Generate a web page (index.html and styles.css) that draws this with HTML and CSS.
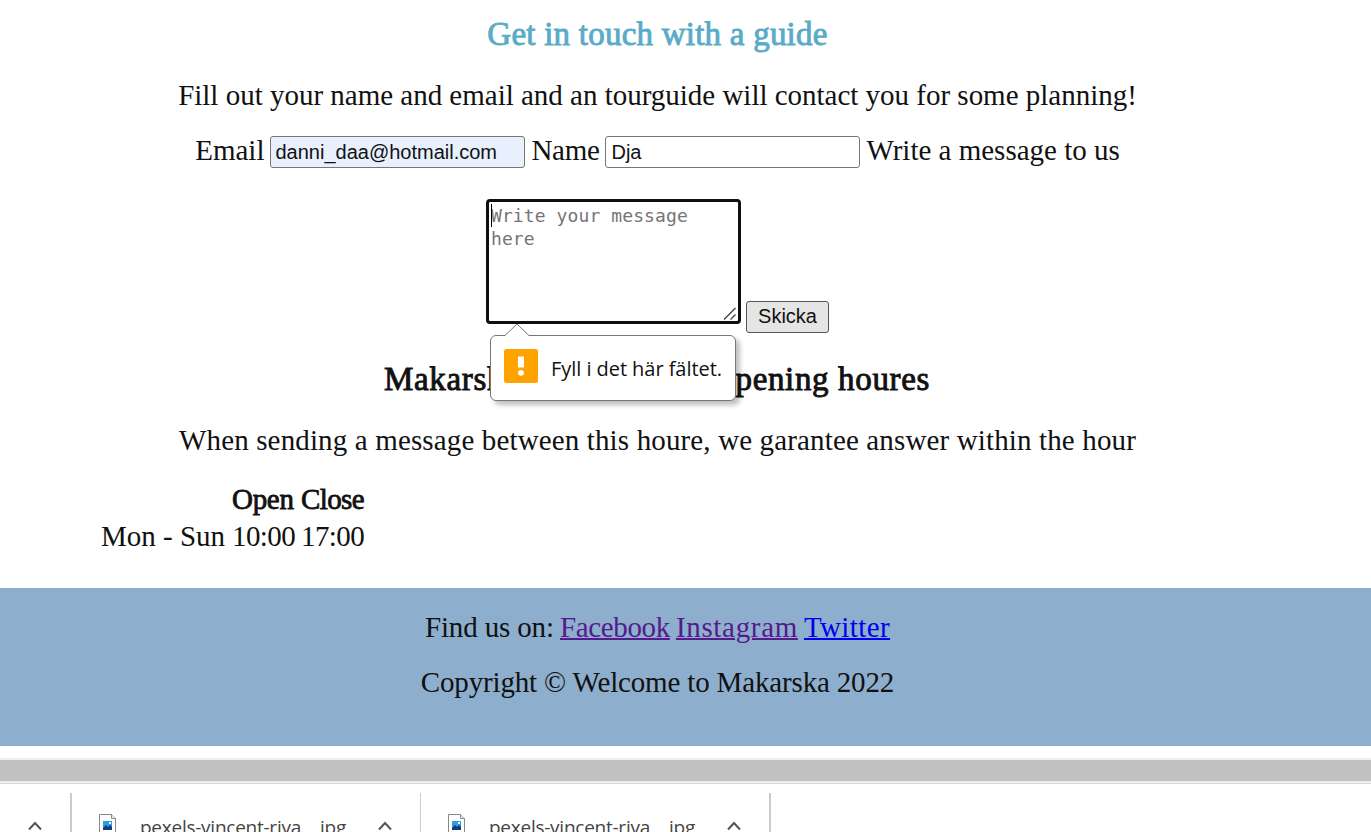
FILE: index.html
```html
<!DOCTYPE html>
<html lang="en">
<head>
<meta charset="utf-8">
<title>Welcome to Makarska</title>
<link rel="stylesheet" href="styles.css">
</head>
<body>
<main class="page">
  <h2 class="title">Get in touch with a guide</h2>
  <p class="intro">Fill out your name and email and an tourguide will contact you for some planning!</p>
  <form class="contact">
    <div class="fields">
      <label class="label" for="email">Email</label>
      <input class="input input-filled" id="email" value="danni_daa@hotmail.com">
      <label class="label label-name" for="name">Name</label>
      <input class="input" id="name" value="Dja">
      <label class="label" for="message">Write a message to us</label>
    </div>
    <div class="message-row">
      <div class="message">
        <textarea class="textarea" id="message" placeholder="Write your message here"></textarea>
        <span class="caret"></span>
        <svg class="grip" width="14" height="14" viewBox="0 0 14 14"><path d="M1 12.500 12.500 1M7.500 12.500l5-5" fill="none" stroke="#444" stroke-width="1.400"/></svg>
        <div class="tooltip">
          <svg class="tooltip-tip" width="26" height="14" viewBox="0 0 26 14"><path d="M1 12.500 13 1 25 12.500V14H1z" fill="#fff"/><path d="M1 12.500 13 1 25 12.500" fill="none" stroke="#777"/></svg>
          <svg class="warning" width="34" height="34" viewBox="0 0 34 34"><rect width="34" height="34" rx="2.500" fill="#ffa300"/><path d="M14 7.500h6v11h-6z" fill="#fff"/><circle cx="17" cy="23.800" r="2.900" fill="#fff"/></svg>
          <span class="tooltip-text">Fyll i det här fältet.</span>
        </div>
      </div>
      <button class="button" type="button">Skicka</button>
    </div>
  </form>
  <h2 class="hours-title"><span>Makarska</span><span>opening houres</span></h2>
  <p class="hours-note">When sending a message between this houre, we garantee answer within the hour</p>
  <div class="hours">
    <b class="open">Open</b><b class="close">Close</b>
    <span class="days">Mon - Sun</span><span class="time">10:00</span><span class="time">17:00</span>
  </div>
</main>
<footer class="footer">
  <p class="social"><span class="find">Find us on:</span><a class="link facebook" href="#">Facebook</a><a class="link instagram" href="#">Instagram</a><a class="link twitter" href="#">Twitter</a></p>
  <p class="copyright">Copyright © Welcome to Makarska 2022</p>
</footer>
<div class="scrollbar"></div>
<div class="downloads">
  <div class="download download-first">
    <svg class="chevron" width="14" height="10" viewBox="0 0 14 10"><path d="M1 8.500 7 2l6 6.500" fill="none" stroke="#555" stroke-width="2"/></svg>
  </div>
  <div class="download download-second">
    <svg class="file" width="17" height="22" viewBox="0 0 17 22"><path d="M.5.5h12l4 4v17H.5z" fill="#fff" stroke="#888"/><path d="M12.500.5v4h4" fill="#eee" stroke="#888"/><path d="M4 7h9v9H4z" fill="#2f9be0"/><path d="M4 14l3-3 2 2 2-2 2 2v3H4z" fill="#123c7c"/><path d="M10 8h2v2h-2z" fill="#fff"/></svg>
    <span class="filename">pexels-vincent-riva</span><span class="ext">jpg</span>
    <svg class="chevron" width="14" height="10" viewBox="0 0 14 10"><path d="M1 8.500 7 2l6 6.500" fill="none" stroke="#555" stroke-width="2"/></svg>
  </div>
  <div class="download download-third">
    <svg class="file" width="17" height="22" viewBox="0 0 17 22"><path d="M.5.5h12l4 4v17H.5z" fill="#fff" stroke="#888"/><path d="M12.500.5v4h4" fill="#eee" stroke="#888"/><path d="M4 7h9v9H4z" fill="#2f9be0"/><path d="M4 14l3-3 2 2 2-2 2 2v3H4z" fill="#123c7c"/><path d="M10 8h2v2h-2z" fill="#fff"/></svg>
    <span class="filename">pexels-vincent-riva</span><span class="ext">jpg</span>
    <svg class="chevron" width="14" height="10" viewBox="0 0 14 10"><path d="M1 8.500 7 2l6 6.500" fill="none" stroke="#555" stroke-width="2"/></svg>
  </div>
</div>
</body>
</html>
```
FILE: styles.css
```css
* { box-sizing: border-box; }
html, body { height: 100%; overflow: hidden; }
body {
  margin: 0;
  background: #fff;
  color: #111;
  font: 29px/36px "Liberation Serif", serif;
  white-space: nowrap;
}
p, h2 { margin: 0; text-align: center; }
.page { width: 1315px; height: 588px; padding-top: 13px; }
.title, .hours-title {
  font-size: 33px;
  line-height: 42px;
  font-weight: 400;
  -webkit-text-stroke: 0.9px currentColor;
}
.title { color: #5aabc8; letter-spacing: 0.23px; margin-bottom: 22px; }
.intro { letter-spacing: -0.01px; margin-bottom: 19px; }
.fields { display: flex; justify-content: center; gap: 6px; height: 36px; }
.label-name { width: 68px; letter-spacing: -0.3px; }
.input {
  width: 255px;
  height: 32px;
  margin: 4px 0 0;
  padding: 0 5px;
  border: 1px solid #767676;
  border-radius: 3px;
  background: #fff;
  color: #111;
  font: 20px "Liberation Sans", sans-serif;
}
.input-filled { padding-left: 4px; background: #e8f0fe; }
.message-row { display: flex; justify-content: center; align-items: flex-end; gap: 6px; height: 134px; margin-top: 31px; }
.message { position: relative; width: 254px; height: 124px; margin-bottom: 10px; }
.textarea {
  display: block;
  width: 255px;
  height: 125px;
  padding: 2px;
  border: 3px solid #101010;
  border-radius: 4px;
  outline: none;
  resize: none;
  overflow: hidden;
  font: 18px/23px "DejaVu Sans Mono", monospace;
  letter-spacing: 0.1px;
  white-space: pre-wrap;
}
.textarea::placeholder { color: #757575; }
.caret { position: absolute; left: 5px; top: 5px; width: 1px; height: 23px; background: #000; }
.grip { position: absolute; right: 3px; bottom: 2px; }
.tooltip {
  position: absolute;
  z-index: 1;
  left: 4px;
  top: 136px;
  display: flex;
  gap: 13px;
  width: 246px;
  height: 66px;
  padding: 13px 0 0 13px;
  border: 1px solid #777;
  border-radius: 6px;
  background: #fff;
  box-shadow: 4px 4px 5px rgba(0, 0, 0, 0.25);
}
.tooltip-tip { position: absolute; left: 13px; top: -13px; }
.tooltip-text { font: 20px/28px "Open Sans", sans-serif; letter-spacing: -0.05px; margin-top: 6px; }
.button {
  width: 83px;
  height: 32px;
  margin: 0;
  padding: 0 0 2px;
  border: 1px solid #555;
  border-radius: 3px;
  background: #e5e5e5;
  color: #111;
  font: 20px "Liberation Sans", sans-serif;
}
.hours-title { display: flex; justify-content: space-between; width: 546px; margin: 25px 0 0 384px; letter-spacing: 0.65px; }
.hours-note { margin-top: 22px; letter-spacing: 0.14px; }
.hours {
  display: grid;
  grid-template-columns: 125px 63px 63px;
  grid-auto-rows: 37px;
  column-gap: 6px;
  margin: 23px 0 0 101px;
}
.open, .close { font-weight: 400; -webkit-text-stroke: 0.8px currentColor; }
.open { grid-column: 2; letter-spacing: -0.3px; }
.close { letter-spacing: -0.6px; }
.time { letter-spacing: -0.6px; }
.footer { height: 158px; padding: 21px 56px 0 0; background: #8daecd; }
.social { display: flex; justify-content: center; gap: 6px; }
.find { width: 129px; letter-spacing: -0.15px; }
.link { text-decoration: underline; text-decoration-thickness: 2px; text-underline-offset: 1px; }
.facebook { width: 110px; letter-spacing: -0.35px; color: #551a8b; }
.instagram { width: 122px; letter-spacing: 0.67px; color: #551a8b; }
.twitter { letter-spacing: 0.4px; color: #0000ee; }
.copyright { margin-top: 19px; letter-spacing: -0.16px; }
.scrollbar { height: 26px; margin-top: 12px; border: solid #eee; border-width: 2px 0 3px; background: #c1c1c1; }
.downloads { display: flex; height: 48px; padding-top: 8px; border-top: 1px solid #fff; box-shadow: 0 -1px #d8d8d8; }
.download { display: flex; height: 39px; border-right: 2px solid #ccc; }
.download-first { width: 72px; padding-left: 28px; }
.download-second { width: 349px; padding-left: 27px; border-right-width: 1px; }
.download-third { width: 350px; padding-left: 27px; }
.chevron { flex: none; margin-top: 28px; }
.file { flex: none; margin-top: 21px; }
.filename, .ext { flex: none; margin-top: 20px; color: #444; font: 19px/28px "Open Sans", sans-serif; letter-spacing: -0.25px; }
.filename { width: 180px; margin-left: 24px; }
.ext { width: 58px; }
```
